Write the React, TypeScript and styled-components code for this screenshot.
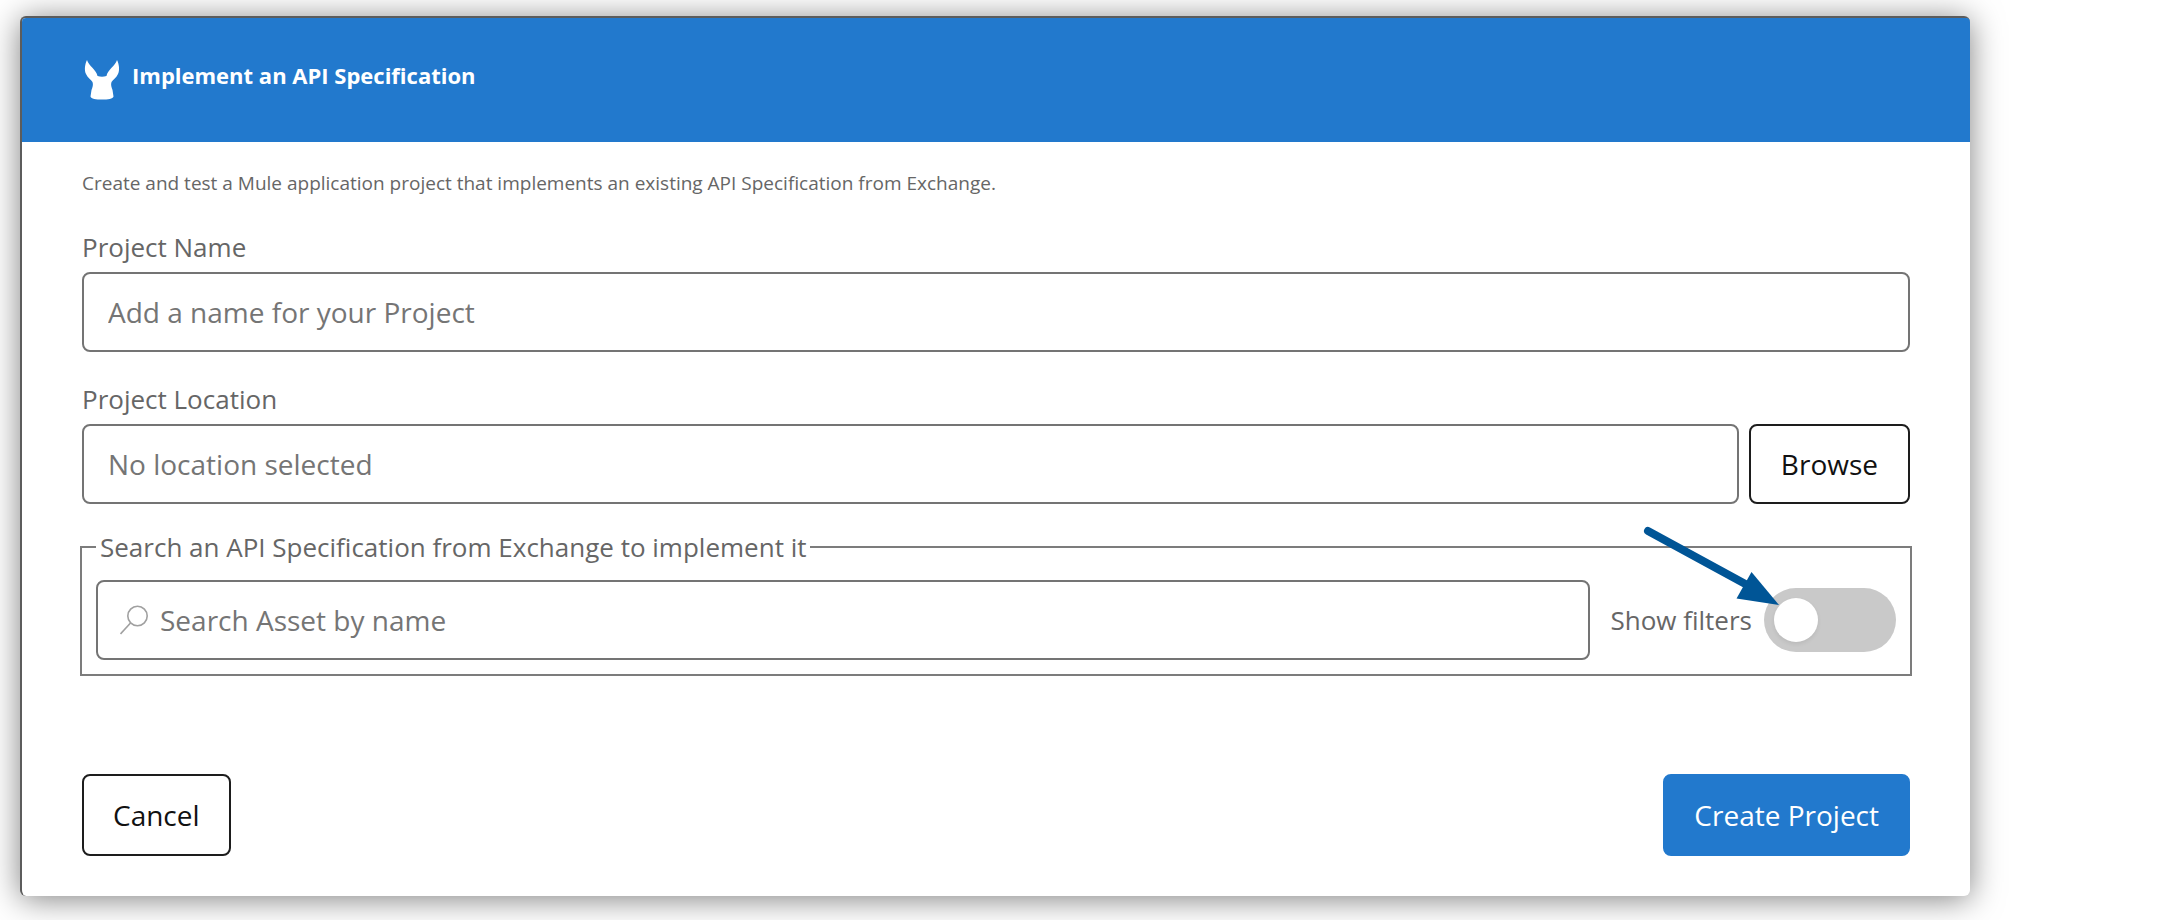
import React from "react";
import styled, { createGlobalStyle } from "styled-components";

const GlobalStyle = createGlobalStyle`
  *, *::before, *::after { box-sizing: border-box; }
  body {
    margin: 0;
    background: #fff;
    color: #666;
    font-family: "Open Sans", "Noto Sans", sans-serif;
  }
  button, input { font: inherit; }
`;

const Page = styled.main`
  padding: 16px 192px 24px 20px;
`;

const Dialog = styled.form`
  border: solid #5c5c5c;
  border-width: 2px 0 0 2px;
  border-radius: 6px;
  background: #fff;
  box-shadow: 0 3px 32px rgba(0, 0, 0, 0.5);
`;

const Header = styled.header`
  display: flex;
  align-items: flex-start;
  gap: 12px;
  padding: 42px 62px;
  border-radius: 4px 4px 0 0;
  background: #2279cd;
  color: #fff;
`;

const Title = styled.h1`
  margin: 0;
  font-size: 22px;
  font-weight: 700;
  line-height: 30px;
`;

const Body = styled.div`
  padding: 29px 60px 40px;
`;

const Description = styled.p`
  margin: 0 0 36px;
  font-size: 19px;
  line-height: 24px;
`;

const Field = styled.div`
  display: flex;
  flex-direction: column;
  gap: 9px;
  margin-bottom: 31px;
`;

const Label = styled.label`
  font-size: 26px;
  line-height: 32px;
`;

const Row = styled.div<{ $gap: number }>`
  display: flex;
  align-items: center;
  gap: ${(p) => p.$gap}px;
`;

const InputFrame = styled.div<{ $icon?: boolean }>`
  display: flex;
  flex: 1 1 auto;
  align-items: center;
  gap: 12px;
  min-width: 0;
  height: 80px;
  padding: 0 ${(p) => (p.$icon ? 22 : 24)}px;
  border: 2px solid #747474;
  border-radius: 8px;
`;

const TextInput = styled.input`
  flex: 1;
  min-width: 0;
  padding: 0;
  border: 0;
  outline: 0;
  background: transparent;
  color: #333;
  font-size: 28px;
  line-height: 40px;
  &::placeholder { color: #757575; opacity: 1; }
`;

const Button = styled.button<{ $primary?: boolean; $tall?: boolean }>`
  height: ${(p) => (p.$tall ? 82 : 80)}px;
  padding: 0 ${(p) => (p.$tall ? 29 : 30)}px;
  border: 2px solid ${(p) => (p.$primary ? "#2279cd" : "#1d1d1d")};
  border-radius: 8px;
  background: ${(p) => (p.$primary ? "#2279cd" : "#fff")};
  color: ${(p) => (p.$primary ? "#fff" : "#111")};
  font-size: 28px;
  cursor: pointer;
`;

const SearchGroup = styled.fieldset`
  min-width: 0;
  margin: -4px -2px 98px;
  padding: 17px 14px 14px;
  border: 2px solid #7c7c7c;
`;

const Legend = styled.legend`
  padding: 0 4px;
  font-size: 26px;
  line-height: 32px;
`;

const FilterLabel = styled(Label)`
  margin-left: 8px;
`;

const ToggleArea = styled.div`
  position: relative;
  display: flex;
`;

const Toggle = styled.input`
  appearance: none;
  display: flex;
  align-items: center;
  width: 132px;
  height: 64px;
  margin: 0;
  padding: 0 10px;
  border-radius: 32px;
  background: #c9c9c9;
  cursor: pointer;
  &::before {
    content: "";
    width: 44px;
    height: 44px;
    border-radius: 50%;
    background: #fff;
    box-shadow: 0 2px 4px rgba(0, 0, 0, 0.08);
  }
  &:checked {
    justify-content: flex-end;
    background: #2279cd;
  }
`;

const Pointer = styled.svg`
  position: absolute;
  right: 113px;
  bottom: 43px;
  pointer-events: none;
`;

const Footer = styled.footer`
  display: flex;
  justify-content: space-between;
`;

function MuleIcon() {
  return (
    <svg width="36" height="40" viewBox="0 0 36 40" fill="#fff" aria-hidden="true">
      <path d="M3 0C1 4 0 10 2 14C3.500 17.500 7 19.500 8.500 22C9.500 25 8.500 27 7.500 30L6.500 36.500C7 39 12 39.500 18 39.500S29 39 29.500 36.500L28.500 30C27.500 27 26.500 25 27.500 22C29 19.500 32.500 17.500 34 14C36 10 35 4 33 0C31.500 5.500 23.500 10 22.500 16Q18 17.500 13.500 16C12.500 10 4.500 5.500 3 0Z" />
    </svg>
  );
}

function SearchIcon() {
  return (
    <svg width="28" height="30" viewBox="0 0 28 30" fill="none" stroke="#a0a0a0" strokeWidth="1.6" aria-hidden="true">
      <circle cx="17.500" cy="11" r="9.700" />
      <path d="M10.500 18L0.500 29" />
    </svg>
  );
}

export default function App() {
  return (
    <Page>
      <GlobalStyle />
      <Dialog onSubmit={(e) => e.preventDefault()}>
        <Header>
          <MuleIcon />
          <Title>Implement an API Specification</Title>
        </Header>
        <Body>
          <Description>
            Create and test a Mule application project that implements an existing API Specification from Exchange.
          </Description>
          <Field>
            <Label htmlFor="project-name">Project Name</Label>
            <Row $gap={10}>
              <InputFrame>
                <TextInput id="project-name" placeholder="Add a name for your Project" />
              </InputFrame>
            </Row>
          </Field>
          <Field>
            <Label htmlFor="project-location">Project Location</Label>
            <Row $gap={10}>
              <InputFrame>
                <TextInput id="project-location" placeholder="No location selected" />
              </InputFrame>
              <Button type="button">Browse</Button>
            </Row>
          </Field>
          <SearchGroup>
            <Legend>Search an API Specification from Exchange to implement it</Legend>
            <Row $gap={12}>
              <InputFrame $icon>
                <SearchIcon />
                <TextInput aria-label="Search Asset by name" placeholder="Search Asset by name" />
              </InputFrame>
              <FilterLabel htmlFor="show-filters">Show filters</FilterLabel>
              <ToggleArea>
                <Toggle id="show-filters" type="checkbox" role="switch" />
                <Pointer width="140" height="84" viewBox="0 0 140 84" fill="#005596" aria-hidden="true">
                  <path d="M5 6L106 61" stroke="#005596" strokeWidth="8" strokeLinecap="round" />
                  <path d="M136 80L108.500 47L93.500 73.500Z" />
                </Pointer>
              </ToggleArea>
            </Row>
          </SearchGroup>
          <Footer>
            <Button type="button" $tall>Cancel</Button>
            <Button type="submit" $primary $tall>Create Project</Button>
          </Footer>
        </Body>
      </Dialog>
    </Page>
  );
}
